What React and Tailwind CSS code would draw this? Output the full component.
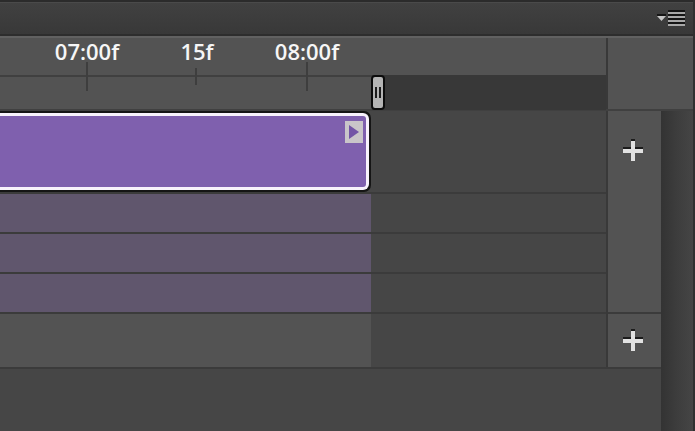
const marks = [
  { label: '07:00f', major: true },
  { label: '15f', major: false },
  { label: '08:00f', major: true },
];

const layers = ['Layer 1', 'Layer 2', 'Layer 3'];

function PanelHeader() {
  return (
    <header className="flex h-[38px] items-center justify-end border-t-2 border-b-2 border-t-[#2b2b2b] border-b-[#616161] bg-linear-to-b from-[#414141] to-[#383838] pr-2 shadow-[inset_0_1px_0_#4a4a4a,inset_0_-2px_0_#2d2d2d]">
      <button type="button" aria-label="Panel menu" className="block">
        <svg width="29" height="20" viewBox="0 0 29 20" className="block">
          <path d="M1 5h9v2H1z" fill="#151515" />
          <path d="M1 7h9L5.500 12z" fill="#c4c4c4" />
          <path d="M12 1h17v2H12zM12 5h17v2H12zM12 9h17v2H12zM12 13h17v2H12z" fill="#151515" />
          <path d="M12 3h17v2H12zM12 7h17v2H12zM12 11h17v2H12zM12 15h17v2H12z" fill="#a8a8a8" />
        </svg>
      </button>
    </header>
  );
}

function Ruler() {
  return (
    <div className="relative min-w-0 flex-1 border-r-2 border-[#393939]">
      <div className="flex h-[37px] pl-8">
        {marks.map((mark) => (
          <div key={mark.label} className="relative flex w-[110px] shrink-0 justify-center">
            <span
              className={
                mark.major
                  ? 'absolute top-[24px] left-[54px] h-[29px] w-[2px] bg-[#3e3e3e]'
                  : 'absolute top-[30px] left-[53px] h-[17px] w-[2px] bg-[#3e3e3e]'
              }
            />
            <span className="relative text-[22px] leading-[26px] font-semibold text-[#f6f6f6]">{mark.label}</span>
          </div>
        ))}
      </div>
      <div className="flex h-[35px]">
        <div className="w-[372px] shrink-0 border-t-2 border-[#404040]" />
        <div className="flex-1 bg-[#383838]" />
      </div>
      <button
        type="button"
        aria-label="Work area end"
        className="absolute top-[37px] left-[371px] flex h-[35px] w-[14px] items-center justify-center gap-[2px] rounded-[4px] border-2 border-[#0c0c0c] bg-[#b4b4b4]"
      >
        <span className="h-[11px] w-[2px] bg-[#1c1c1c]" />
        <span className="h-[11px] w-[2px] bg-[#1c1c1c]" />
      </button>
    </div>
  );
}

function AddButton({ label }) {
  return (
    <button type="button" aria-label={label} className="block">
      <svg width="22" height="24" viewBox="0 0 22 24" className="block">
        <path d="M9 0h4v2H9zM1 8h8v2H1zM13 8h8v2h-8z" fill="#1c1c1c" />
        <path d="M9 2h4v8h8v4h-8v8H9v-8H1v-4h8z" fill="#e2e2e2" />
      </svg>
    </button>
  );
}

function Clip() {
  return (
    <div className="h-[81px] w-[371px] rounded-r-[7px] border-y-2 border-r-2 border-[#151515] bg-[#151515]">
      <div className="flex h-full items-start justify-end rounded-r-[6px] border-y-[3px] border-r-[3px] border-[#f8f2fc] bg-[#7f60ae] pt-[5px] pr-[3px]">
        <button type="button" aria-label="Clip settings" className="flex h-[22px] w-[18px] items-center justify-center bg-[#c9c5c9]">
          <svg width="12" height="16" viewBox="0 0 12 16" className="block">
            <path d="M1 1l10 7-10 7z" fill="#7354a6" />
          </svg>
        </button>
      </div>
    </div>
  );
}

export default function App() {
  return (
    <main
      className="flex min-h-screen flex-col overflow-hidden border-r-2 border-[#303030] bg-[#464646]"
      style={{ fontFamily: '"Open Sans", "Noto Sans", sans-serif' }}
    >
      <PanelHeader />
      <div className="flex h-[73px] border-b-2 border-[#404040] bg-[#535353]">
        <Ruler />
        <div className="w-[85px] shrink-0" />
      </div>
      <div className="flex flex-1">
        <div className="min-w-0 flex-1">
          <div className="flex">
            <div className="min-w-0 flex-1 border-r-2 border-[#393939]">
              <div className="h-[83px] border-b-2 border-[#3b3b3b]">
                <Clip />
              </div>
              {layers.map((layer) => (
                <div key={layer} className="h-[40px] border-b-2 border-[#3b3b3b]">
                  <div className="h-full w-[371px] bg-[#60566d]" />
                </div>
              ))}
            </div>
            <div className="flex w-[53px] shrink-0 items-start justify-center border-b-2 border-[#3b3b3b] bg-[#535353] pt-7 pr-[3px]">
              <AddButton label="Add media to track" />
            </div>
          </div>
          <div className="flex h-[55px] border-b-2 border-[#3b3b3b]">
            <div className="min-w-0 flex-1 border-r-2 border-[#393939]">
              <div className="h-full w-[371px] bg-[#535353]" />
            </div>
            <div className="flex w-[53px] shrink-0 items-center justify-center bg-[#535353] pr-[3px]">
              <AddButton label="Add audio to track" />
            </div>
          </div>
        </div>
        <div className="w-8 shrink-0 bg-linear-to-r from-[#333333] via-[#3d3d3d] to-[#454545]" />
      </div>
    </main>
  );
}
